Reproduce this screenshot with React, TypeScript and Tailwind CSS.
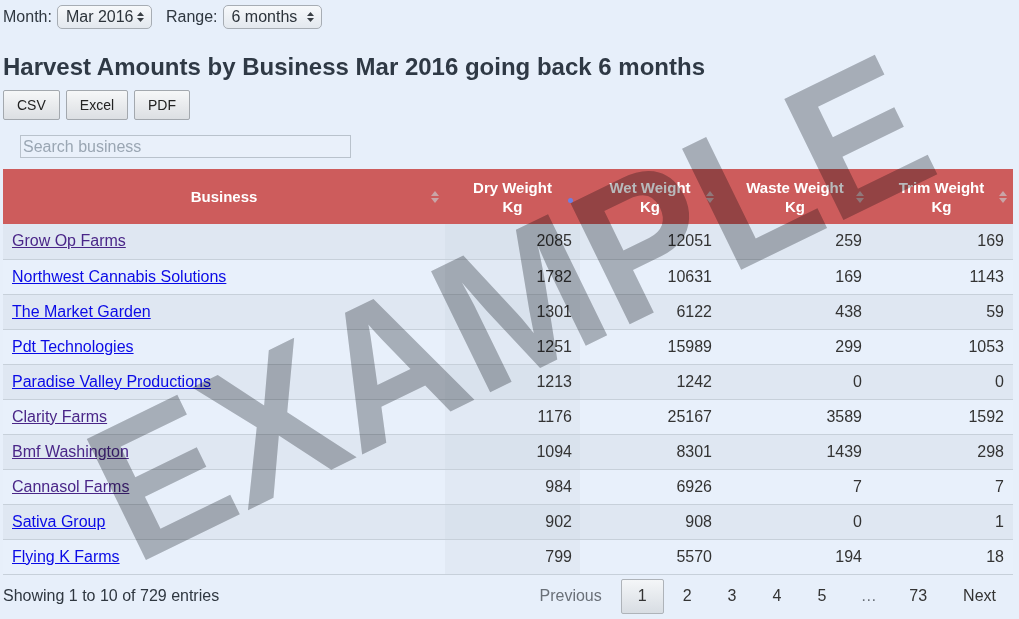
import React from 'react';

const rows = [
  { name: 'Grow Op Farms', dry: 2085, wet: 12051, waste: 259, trim: 169, visited: true },
  { name: 'Northwest Cannabis Solutions', dry: 1782, wet: 10631, waste: 169, trim: 1143, visited: false },
  { name: 'The Market Garden', dry: 1301, wet: 6122, waste: 438, trim: 59, visited: false },
  { name: 'Pdt Technologies', dry: 1251, wet: 15989, waste: 299, trim: 1053, visited: false },
  { name: 'Paradise Valley Productions', dry: 1213, wet: 1242, waste: 0, trim: 0, visited: false },
  { name: 'Clarity Farms', dry: 1176, wet: 25167, waste: 3589, trim: 1592, visited: true },
  { name: 'Bmf Washington', dry: 1094, wet: 8301, waste: 1439, trim: 298, visited: true },
  { name: 'Cannasol Farms', dry: 984, wet: 6926, waste: 7, trim: 7, visited: true },
  { name: 'Sativa Group', dry: 902, wet: 908, waste: 0, trim: 1, visited: false },
  { name: 'Flying K Farms', dry: 799, wet: 5570, waste: 194, trim: 18, visited: false },
];

function SortIcon() {
  return (
    <svg width="8" height="14" viewBox="0 0 8 14" className="absolute right-[6px] top-1/2 -translate-y-1/2">
      <path d="M0 6 L4 1 L8 6 Z" fill="#c9a5a7" />
      <path d="M0 8 L4 13 L8 8 Z" fill="#c9a5a7" />
    </svg>
  );
}

function SelectArrows() {
  return (
    <svg width="7" height="12" viewBox="0 0 7 12">
      <path d="M0 5 L3.5 1 L7 5 Z" fill="#3a3f45" />
      <path d="M0 7 L3.5 11 L7 7 Z" fill="#3a3f45" />
    </svg>
  );
}

function FakeSelect({ label, width }: { label: string; width: string }) {
  return (
    <div className={`${width} h-[24px] flex items-center justify-between pl-[8px] pr-[7px] rounded-[5px] border border-[#a7adb4] bg-gradient-to-b from-[#f7f9fb] to-[#e3e8ee] text-[16px] text-[#2c333a]`}>
      <span>{label}</span>
      <SelectArrows />
    </div>
  );
}

export default function App() {
  return (
    <div className="relative w-[1019px] h-[619px] overflow-hidden bg-[#e7effa] font-['Liberation_Sans',Arial,sans-serif] text-[#333]">
      <div className="pl-[3px] pr-[6px] pt-[5px]">
        {/* filters */}
        <div className="flex items-center h-[24px] text-[16px] text-[#2f3740]">
          <span>Month:</span>
          <div className="ml-[5px]">
            <FakeSelect label="Mar 2016" width="w-[95px]" />
          </div>
          <span className="ml-[14px]">Range:</span>
          <div className="ml-[5px]">
            <FakeSelect label="6 months" width="w-[99px]" />
          </div>
        </div>

        <h2 className="mt-[24px] text-[24px] leading-[28px] font-bold text-[#2f3945]">
          Harvest Amounts by Business Mar 2016 going back 6 months
        </h2>

        {/* export buttons */}
        <div className="mt-[9px] flex gap-[6px]">
          {['CSV', 'Excel', 'PDF'].map((b) => (
            <button
              key={b}
              className="h-[30px] px-[13px] text-[14px] text-[#222] rounded-[2px] border border-[#a3a8ae] bg-gradient-to-b from-[#f6f7f8] to-[#dcdfe3]"
            >
              {b}
            </button>
          ))}
        </div>

        <div className="mt-[15px] ml-[17px]">
          <input
            type="text"
            placeholder="Search business"
            className="block w-[331px] h-[23px] px-[2px] text-[16px] bg-[#e9f0fa] border border-[#b9c2cc] outline-none placeholder:text-[#9aa6b3]"
          />
        </div>

        {/* table */}
        <table className="mt-[11px] w-[1010px] table-fixed border-collapse">
          <colgroup>
            <col className="w-[442px]" />
            <col className="w-[135px]" />
            <col className="w-[140px]" />
            <col className="w-[150px]" />
            <col className="w-[143px]" />
          </colgroup>
          <thead>
            <tr className="bg-[#cd5c5c] text-white text-[15px] leading-[19px] font-bold">
              <th className="relative h-[55px] px-[18px]">
                Business
                <SortIcon />
              </th>
              <th className="relative h-[55px] px-[14px]">
                Dry Weight<br />Kg
                <span className="absolute right-[7px] top-[29px] w-[5px] h-[5px] rounded-full bg-[#6d7fe2]" />
              </th>
              <th className="relative h-[55px] px-[14px]">
                Wet Weight<br />Kg
                <SortIcon />
              </th>
              <th className="relative h-[55px] px-[14px]">
                Waste Weight<br />Kg
                <SortIcon />
              </th>
              <th className="relative h-[55px] px-[14px]">
                Trim Weight<br />Kg
                <SortIcon />
              </th>
            </tr>
          </thead>
          <tbody className="text-[16px]">
            {rows.map((r, i) => {
              const odd = i % 2 === 0;
              return (
                <tr key={r.name} className={odd ? 'bg-[#dfe7f2]' : 'bg-[#e8f0fb]'}>
                  <td className="h-[35px] px-[9px] border-b border-[#c7d0da]">
                    <a
                      href="#"
                      className={`underline ${r.visited ? 'text-[#4a2688]' : 'text-[#0a0ae6]'}`}
                    >
                      {r.name}
                    </a>
                  </td>
                  <td className={`h-[35px] px-[8px] text-right border-b border-[#c7d0da] ${odd ? 'bg-[#d9e2ed]' : 'bg-[#e1e9f4]'}`}>{r.dry}</td>
                  <td className="h-[35px] px-[8px] text-right border-b border-[#c7d0da]">{r.wet}</td>
                  <td className="h-[35px] px-[8px] text-right border-b border-[#c7d0da]">{r.waste}</td>
                  <td className="h-[35px] px-[9px] text-right border-b border-[#c7d0da]">{r.trim}</td>
                </tr>
              );
            })}
          </tbody>
        </table>

        {/* footer */}
        <div className="flex items-start justify-between pt-[4px] text-[16px]">
          <div className="h-[35px] flex items-center text-[#2f3740]">Showing 1 to 10 of 729 entries</div>
          <div className="flex items-center">
            <span className="h-[35px] px-4 flex items-center text-[#6a7078] border border-transparent">Previous</span>
            {['1', '2', '3', '4', '5'].map((p) => (
              <span
                key={p}
                className={`ml-[2px] h-[35px] px-4 flex items-center border rounded-[2px] ${
                  p === '1'
                    ? 'border-[#aeb3b9] bg-gradient-to-b from-[#f4f6f8] to-[#d8dde3] text-[#333]'
                    : 'border-transparent text-[#333]'
                }`}
              >
                {p}
              </span>
            ))}
            <span className="ml-[4px] h-[35px] w-[43px] flex items-center justify-center text-[#6a7078]">…</span>
            <span className="ml-[2px] h-[35px] px-4 flex items-center border border-transparent text-[#333]">73</span>
            <span className="ml-[2px] h-[35px] px-4 flex items-center border border-transparent text-[#333]">Next</span>
          </div>
        </div>
      </div>

      {/* watermark */}
      <div className="absolute inset-0 pointer-events-none overflow-hidden">
        <span className="absolute left-[510px] top-[308px] -translate-x-1/2 -translate-y-1/2 rotate-[-26deg] scale-x-[0.95] whitespace-nowrap text-[196px] leading-none font-bold text-[#b7b9bb] mix-blend-multiply">
          EXAMPLE
        </span>
      </div>
    </div>
  );
}
